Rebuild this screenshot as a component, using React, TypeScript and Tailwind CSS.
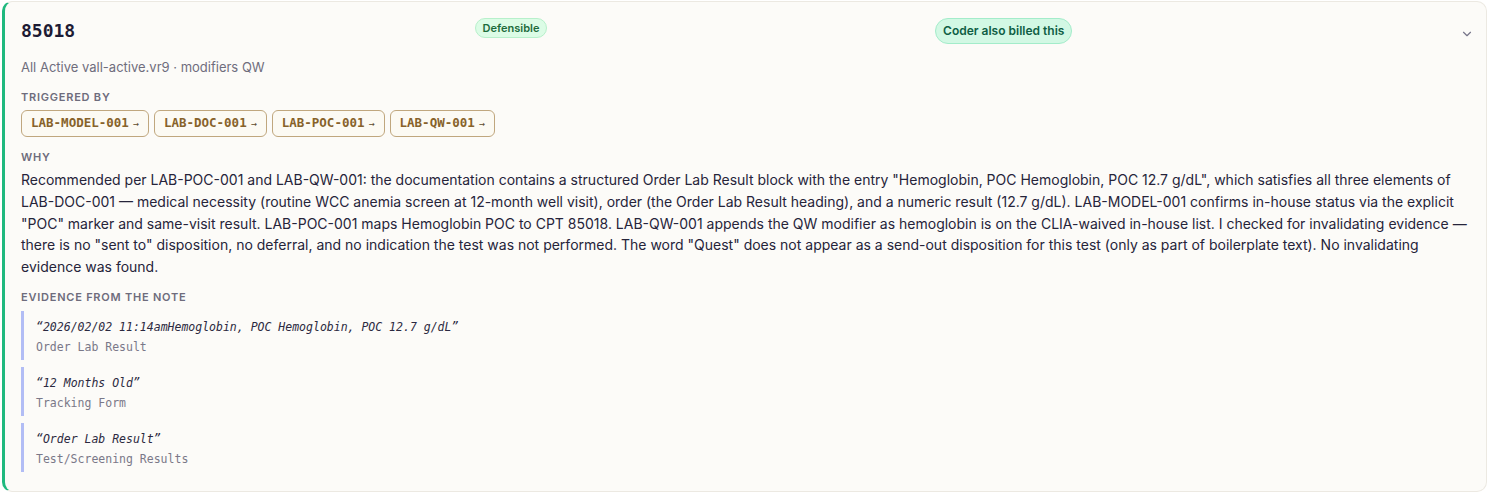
import React from 'react';
import { ChevronDown } from 'lucide-react';

const mono = "font-['DejaVu_Sans_Mono','Liberation_Mono',monospace]";

const triggers = ['LAB-MODEL-001', 'LAB-DOC-001', 'LAB-POC-001', 'LAB-QW-001'];

const evidence = [
    { quote: '2026/02/02 11:14amHemoglobin, POC Hemoglobin, POC 12.7 g/dL', source: 'Order Lab Result' },
    { quote: '12 Months Old', source: 'Tracking Form' },
    { quote: 'Order Lab Result', source: 'Test/Screening Results' },
];

const SectionLabel: React.FC<{ children: React.ReactNode }> = ({ children }) => (
    <div className="text-[11px] leading-4 font-semibold tracking-[0.07em] uppercase text-[#6e6c7c]">{children}</div>
);

export default function App() {
    return (
        <div className="min-h-screen bg-white pt-px pl-[2px] pr-px font-['Inter','Noto_Sans',sans-serif]">
            <div className="rounded-[10px] border border-[#ece9e2] border-l-[3px] border-l-[#1fb97f] bg-[#fcfbf8] pl-4 pr-3 pt-4 pb-[19px]">
                <div className="flex items-start justify-between">
                    <div className={`${mono} w-[66px] text-[18px] leading-[26px] font-bold text-[#1d1b34]`}>85018</div>
                    <span className="rounded-full border border-[#b7f0cb] bg-[#dcfce6] px-[7px] h-5 leading-[18px] text-[11px] font-semibold text-[#1d6b3c]">
                        Defensible
                    </span>
                    <span className="rounded-full border border-[#a3ecca] bg-[#d2f8e4] px-[7px] h-[26px] leading-6 text-[12px] font-semibold text-[#0f5e44]">
                        Coder also billed this
                    </span>
                    <ChevronDown className="mt-[9px] h-[14px] w-[14px] text-[#77758a]" strokeWidth={2} />
                </div>

                <div className="mt-[13px] text-[13px] leading-5 text-[#6f6d7d]">All Active vall-active.vr9 · modifiers QW</div>

                <div className="mt-3">
                    <SectionLabel>Triggered by</SectionLabel>
                    <div className="mt-[5px] flex gap-[5px]">
                        {triggers.map((t) => (
                            <span
                                key={t}
                                className={`${mono} inline-flex items-center h-[27px] rounded-md border border-[#c0a77e] bg-[#fcfaf3] px-[9px] text-[12.5px] font-bold text-[#87622a]`}
                            >
                                {t}
                                <span className="ml-1 text-[10px] font-normal text-[#5d4a2c]">→</span>
                            </span>
                        ))}
                    </div>
                </div>

                <div className="mt-3">
                    <SectionLabel>Why</SectionLabel>
                    <p className="mt-1 text-[14px] leading-[21.8px] text-[#26243a]">
                        Recommended per LAB-POC-001 and LAB-QW-001: the documentation contains a structured Order Lab Result block with the entry "Hemoglobin, POC Hemoglobin, POC 12.7 g/dL", which satisfies all three elements of LAB-DOC-001 — medical necessity (routine WCC anemia screen at 12-month well visit), order (the Order Lab Result heading), and a numeric result (12.7 g/dL). LAB-MODEL-001 confirms in-house status via the explicit "POC" marker and same-visit result. LAB-POC-001 maps Hemoglobin POC to CPT 85018. LAB-QW-001 appends the QW modifier as hemoglobin is on the CLIA-waived in-house list. I checked for invalidating evidence — there is no "sent to" disposition, no deferral, and no indication the test was not performed. The word "Quest" does not appear as a send-out disposition for this test (only as part of boilerplate text). No invalidating evidence was found.
                    </p>
                </div>

                <div className="mt-[11px]">
                    <SectionLabel>Evidence from the note</SectionLabel>
                    <div className="mt-[6px] flex flex-col gap-[7px]">
                        {evidence.map((e) => (
                            <div key={e.quote} className="border-l-[3px] border-[#b2bdf5] pl-3 pt-[7px] pb-[4px]">
                                <div className={`${mono} italic text-[11.5px] leading-[18px] text-[#2b2940]`}>“{e.quote}”</div>
                                <div className={`${mono} mt-[2px] text-[11.5px] leading-[18px] text-[#7a7888]`}>{e.source}</div>
                            </div>
                        ))}
                    </div>
                </div>
            </div>
        </div>
    );
}
